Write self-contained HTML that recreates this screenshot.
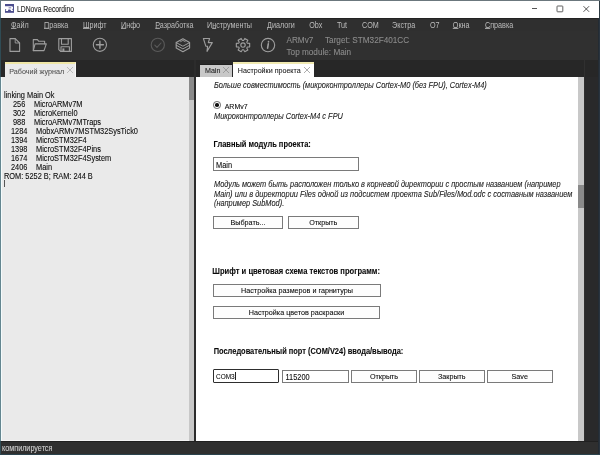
<!DOCTYPE html>
<html><head><meta charset="utf-8">
<style>
*{margin:0;padding:0;box-sizing:border-box}
html,body{width:600px;height:455px;overflow:hidden;background:#2d3b43}
body{-webkit-font-smoothing:antialiased;will-change:transform;position:relative;font-family:"Liberation Sans",sans-serif;font-size:7.4px;color:#0a0a0a}
.t{transform:scaleY(1.15);transform-origin:0 0.12em}
.a{position:absolute;white-space:pre;line-height:1;-webkit-text-stroke:0.08px currentColor}
#title{left:1px;top:1px;width:598px;height:17px;background:#fff}
#bt{left:0;top:0;width:600px;height:1px;background:#6b777d}
#br{left:598px;top:18px;width:2px;height:437px;background:linear-gradient(90deg,#232b33 50%,#2a3540 50%)}
#bl{left:0;top:1px;width:1px;height:454px;background:linear-gradient(180deg,#5f7680 0,#5f7680 17px,#2f4b54 17px,#2f4b54 76px,#648690 76px,#648690 440px,#2f4b54 440px)}
#bb{left:0;top:454px;width:600px;height:1px;background:#2b434d}
#menu{left:1px;top:18px;width:597px;height:13px;background:#2f2f2f;border-top:1px solid #232323}
#tool{left:1px;top:31px;width:597px;height:29px;background:#303030}
#strip{left:1px;top:60px;width:597px;height:381px;background:#272727}
#rstrip{left:584px;top:77px;width:14px;height:364px;background:#29292a}
#vline{left:584px;top:60px;width:1px;height:381px;background:#303030}
#status{left:1px;top:441px;width:597px;height:13px;background:#2f2f2f;border-top:1px solid #202020}
.mi{color:#bcbcbc;font-size:7.2px;top:21.2px;-webkit-text-stroke:0}
.mi u{text-decoration:underline;text-decoration-thickness:0.7px;text-underline-offset:-0.3px;text-decoration-color:#a8a8a8}
#lpanel{left:1px;top:77px;width:188px;height:364px;background:#eaeaea;border-left:1px solid #f4fbfc;border-bottom:1px solid #f4f4f4}
#lscroll{left:189px;top:77px;width:5px;height:364px;background:#c8c8c8}
#lthumb{left:189px;top:77px;width:5px;height:23px;background:#8a8a8a}
#rpanel{left:196px;top:77px;width:382px;height:364px;background:#fff}
#rscroll{left:578px;top:77px;width:6px;height:364px;background:#c8c8c8}
#rthumb{left:578px;top:185px;width:6px;height:23px;background:#8a8a8a}
.tab{height:14px;font-size:7.4px}
.log{left:4px;font-size:7.4px;color:#0a0a0a}
.it{font-style:italic;color:#1a1a1a}
.b{font-weight:bold}
.btn{border:1px solid #7a7a7a;background:#fdfdfd;text-align:center}
.bt{font-size:7.2px;text-align:center}
.inp{border:1px solid #7a7a7a;background:#fff}
</style></head><body>
<div class="a" id="title"></div>
<!-- logo -->
<svg class="a" style="left:0;top:0" width="20" height="18" viewBox="0 0 20 18">
<rect x="5" y="4" width="9" height="8.8" fill="#4c4e8e"/>
<path d="M5 6.3 H12.2 L13 7.2 V8.6 L12.2 9.3 L13.2 10.9 H11.2 L10.2 9.4 H8.4 L7.9 10.9 H5.6 L6.3 9.3 H5 Z M8.6 7.4 V8.3 H11.2 V7.4 Z" fill="#fff" fill-rule="evenodd"/>
</svg>
<div class="a t" style="left:17px;top:5.8px;font-size:6.75px;color:#1a1a1a;transform:scaleY(1.28)">LDNova Recordino</div>
<div class="a" style="left:531.5px;top:8px;width:5.5px;height:1px;background:#555"></div>
<svg class="a" style="left:555px;top:4px" width="10" height="10" viewBox="0 0 10 10"><rect x="2" y="2" width="5.8" height="5.8" rx="0.6" fill="none" stroke="#3a3a3a" stroke-width="0.8"/></svg>
<svg class="a" style="left:582px;top:4px" width="9" height="9" viewBox="0 0 9 9"><path d="M1.5 2.2 L7.1 7.8 M7.1 2.2 L1.5 7.8" stroke="#222" stroke-width="0.75"/></svg>

<div class="a" id="menu"></div>
<div class="a" id="tool"></div>
<div class="a" id="strip"></div><div class="a" id="rstrip"></div><div class="a" id="vline"></div><div class="a" style="left:194px;top:60px;width:2px;height:381px;background:#2c2c2c"></div><div class="a" id="bt"></div><div class="a" id="br"></div><div class="a" id="bl"></div><div class="a" id="bb"></div>
<div class="a" id="status"></div>

<div class="a mi t" style="left:11px"><u>Ф</u>айл</div>
<div class="a mi t" style="left:44px"><u>П</u>равка</div>
<div class="a mi t" style="left:83px"><u>Ш</u>рифт</div>
<div class="a mi t" style="left:121px"><u>И</u>нфо</div>
<div class="a mi t" style="left:155.3px"><u>Р</u>азработка</div>
<div class="a mi t" style="left:207px">И<u>н</u>струменты</div>
<div class="a mi t" style="left:267px"><u>Д</u>иалоги</div>
<div class="a mi t" style="left:309.2px">Obx</div>
<div class="a mi t" style="left:337px">Tut</div>
<div class="a mi t" style="left:362px">COM</div>
<div class="a mi t" style="left:392px">Экстра</div>
<div class="a mi t" style="left:430px">O7</div>
<div class="a mi t" style="left:452.8px"><u>О</u>кна</div>
<div class="a mi t" style="left:485px"><u>С</u>правка</div>

<svg class="a" style="left:0;top:0" width="300" height="60" viewBox="0 0 300 60" fill="none" stroke="#9e9e9e" stroke-width="1.1" stroke-linejoin="round" stroke-linecap="round">
<path d="M10 38.6 H15.2 L19.6 43 V51.4 H10 Z"/>
<path d="M15.2 38.6 V43 H19.6" stroke-width="0.9"/>
<path d="M33.3 50.6 V39.6 H37.4 L38.8 41.3 H44.6 V43.7"/>
<path d="M33.3 50.6 L35.1 43.9 H46.3 L44 50.6 Z"/>
<path d="M58.8 38.6 H71.4 V51.4 H60.6 L58.8 49.6 Z"/>
<path d="M61.5 38.6 V44.3 H68.2 V38.6"/>
<path d="M61 51.4 V46.8 H69.4 V51.4"/>
<rect x="62.4" y="48.4" width="2" height="2.6" fill="#9e9e9e" stroke="none"/>
<circle cx="99.9" cy="44.8" r="6.6"/>
<path d="M99.9 41.3 V48.3 M96.4 44.8 H103.4" stroke-width="1.4"/>
<circle cx="157.8" cy="44.9" r="6.6" stroke="#5a5a5a"/>
<path d="M154.8 45.2 L157 47.4 L161 43" stroke="#5a5a5a"/>
<path d="M176.2 42.6 L182.9 38.7 L189.6 42.6 V47.9 L182.9 51.7 L176.2 47.9 Z"/>
<path d="M176.2 42.6 L182.9 46.2 L189.6 42.6 M176.2 45.2 L182.9 48.9 L189.6 45.2" stroke-width="1"/>
<path d="M180.6 41.6 L182.9 40.4 L185.2 41.6" stroke-width="0.9"/>
<path d="M203.4 38.5 H209.6 L208.3 42.6 H212.3 L207 51.4 L207.6 46.2 H205.8 Z"/>
<path d="M247.33 43.27 L249.67 43.33 L249.67 46.87 L247.33 46.93 L246.75 47.93 L247.87 49.99 L244.80 51.76 L243.58 49.76 L242.42 49.76 L241.20 51.76 L238.13 49.99 L239.25 47.93 L238.67 46.93 L236.33 46.87 L236.33 43.33 L238.67 43.27 L239.25 42.27 L238.13 40.21 L241.20 38.44 L242.42 40.44 L243.58 40.44 L244.80 38.44 L247.87 40.21 L246.75 42.27 Z"/>
<circle cx="243.0" cy="45.1" r="2.2"/>
<circle cx="268" cy="45.1" r="6.7"/>
<path d="M268.5 41.6 V41.9 M268.3 43.8 L267.6 48.2" stroke-width="1.6"/>
</svg>
<div class="a" style="left:286.5px;top:36.6px;font-size:8.2px;color:#8c8c8c">ARMv7</div>
<div class="a" style="left:325px;top:36.6px;font-size:8.2px;color:#8c8c8c">Target: STM32F401CC</div>
<div class="a" style="left:286.5px;top:48.5px;font-size:8.2px;color:#8c8c8c">Top module: Main</div>

<!-- left panel -->
<div class="a" style="left:4.5px;top:61.8px;width:71.8px;height:15.2px;background:#eaeaea;border-top:2px solid #efe6a6;border-right:1px solid #f8f8f8"></div>
<div class="a" style="left:9.3px;top:68.2px;font-size:7.2px;color:#555">Рабочий журнал</div>
<svg class="a" style="left:65.9px;top:66.2px" width="8" height="8" viewBox="0 0 8 8"><path d="M1 1 L7 7 M7 1 L1 7" stroke="#9a9a9a" stroke-width="0.6"/></svg>
<div class="a" id="lpanel"></div>
<div class="a" id="lscroll"></div>
<div class="a" id="lthumb"></div>

<div class="a log t" style="top:91px">linking Main Ok</div>
<div class="a log t" style="top:100px;left:13px">256</div><div class="a log t" style="top:100px;left:34px">MicroARMv7M</div>
<div class="a log t" style="top:109px;left:13px">302</div><div class="a log t" style="top:109px;left:34px">MicroKernel0</div>
<div class="a log t" style="top:118px;left:13px">988</div><div class="a log t" style="top:118px;left:34px">MicroARMv7MTraps</div>
<div class="a log t" style="top:127px;left:11px">1284</div><div class="a log t" style="top:127px;left:36px">MobxARMv7MSTM32SysTick0</div>
<div class="a log t" style="top:136px;left:11px">1394</div><div class="a log t" style="top:136px;left:36px">MicroSTM32F4</div>
<div class="a log t" style="top:145px;left:11px">1398</div><div class="a log t" style="top:145px;left:36px">MicroSTM32F4Pins</div>
<div class="a log t" style="top:154px;left:11px">1674</div><div class="a log t" style="top:154px;left:36px">MicroSTM32F4System</div>
<div class="a log t" style="top:163px;left:11px">2406</div><div class="a log t" style="top:163px;left:36px">Main</div>
<div class="a log t" style="top:172px">ROM: 5252 B; RAM: 244 B</div>
<div class="a" style="left:4px;top:180px;width:0.8px;height:7px;background:#555"></div>

<!-- right -->
<div class="a" style="left:200px;top:64px;width:32px;height:13px;background:#c8c8c8;border-top:1px solid #1e1e1e"></div>
<div class="a" style="left:205px;top:68px;font-size:7.1px;color:#222">Main</div>
<svg class="a" style="left:221.5px;top:66.3px" width="8" height="8" viewBox="0 0 8 8"><path d="M1 1 L7 7 M7 1 L1 7" stroke="#8a8a8a" stroke-width="0.7"/></svg>
<div class="a" style="left:233px;top:61.6px;width:80.5px;height:15.4px;background:#fff;border-top:2px solid #f0e9b0"></div>
<div class="a" style="left:237.8px;top:68px;font-size:7.12px;color:#222">Настройки проекта</div>
<svg class="a" style="left:303.2px;top:65.8px" width="8" height="8" viewBox="0 0 8 8"><path d="M1 1 L7 7 M7 1 L1 7" stroke="#8a8a8a" stroke-width="0.7"/></svg>
<div class="a" id="rpanel"></div>
<div class="a" id="rscroll"></div>
<div class="a" id="rthumb"></div>

<div class="a it t" style="left:214px;top:81.4px">Больше совместимость (микроконтроллеры Cortex-M0 (без FPU), Cortex-M4)</div>
<div class="a" style="left:213.3px;top:101.2px;width:7.6px;height:7.6px;border:1.1px solid #666;border-radius:50%"></div>
<div class="a" style="left:215.35px;top:103.25px;width:3.5px;height:3.5px;background:#111;border-radius:50%"></div>
<div class="a t" style="left:224.7px;top:101.6px;font-size:7px">ARMv7</div>
<div class="a it t" style="left:214px;top:112px">Микроконтроллеры Cortex-M4 с FPU</div>

<div class="a b t" style="left:213.5px;top:140.3px;font-size:7.5px">Главный модуль проекта:</div>
<div class="a inp" style="left:212.5px;top:157px;width:146.5px;height:13.5px"></div>
<div class="a t" style="left:216px;top:161px">Main</div>

<div class="a it t" style="left:214px;top:180px">Модуль может быть расположен только в корневой директории с простым названием (например</div>
<div class="a it t" style="left:214px;top:189.6px;font-size:7.45px">Main) или в директории Files одной из подсистем проекта Sub/Files/Mod.odc с составным названием</div>
<div class="a it t" style="left:214px;top:199px">(например SubMod).</div>

<div class="a btn" style="left:213px;top:216px;width:70px;height:13px"></div>
<div class="a bt" style="left:213px;top:219.3px;width:70px;text-align:center">Выбрать...</div>
<div class="a btn" style="left:288px;top:216px;width:70.5px;height:13px"></div>
<div class="a bt" style="left:288px;top:219.3px;width:70.5px;text-align:center">Открыть</div>

<div class="a b t" style="left:212.3px;top:267px;font-size:7.6px">Шрифт и цветовая схема текстов программ:</div>
<div class="a btn" style="left:213px;top:284px;width:168px;height:12.5px"></div>
<div class="a bt" style="left:213px;top:287.3px;width:168px;text-align:center">Настройка размеров и гарнитуры</div>
<div class="a btn" style="left:213px;top:305.5px;width:167px;height:13px"></div>
<div class="a bt" style="left:213px;top:309.3px;width:167px;text-align:center">Настройка цветов раскраски</div>

<div class="a b t" style="left:213.7px;top:347px;font-size:7.45px">Последовательный порт (COM/V24) ввода/вывода:</div>
<div class="a" style="left:212.8px;top:369.3px;width:66px;height:13.4px;border:1.8px solid #2e2e2e;border-radius:1px;background:#fff"></div>
<div class="a" style="left:216px;top:372.8px;font-size:7.6px;transform:scale(0.85,1);transform-origin:0 0">COM3</div>
<div class="a" style="left:235px;top:372.4px;width:0.9px;height:7.2px;background:#222"></div>
<div class="a inp" style="left:281.5px;top:370px;width:67px;height:12.5px"></div>
<div class="a t" style="left:285.5px;top:373px">115200</div>
<div class="a btn" style="left:351px;top:370px;width:66px;height:12.5px"></div>
<div class="a bt" style="left:351px;top:372.7px;width:66px;text-align:center">Открыть</div>
<div class="a btn" style="left:419px;top:370px;width:65.5px;height:12.5px"></div>
<div class="a bt" style="left:419px;top:372.7px;width:65.5px;text-align:center">Закрыть</div>
<div class="a btn" style="left:487px;top:370px;width:65.5px;height:12.5px"></div>
<div class="a bt" style="left:487px;top:372.7px;width:65.5px;text-align:center">Save</div>

<div class="a t" style="left:2px;top:443.8px;font-size:7.23px;color:#d0d0d0">компилируется</div>
</body></html>
